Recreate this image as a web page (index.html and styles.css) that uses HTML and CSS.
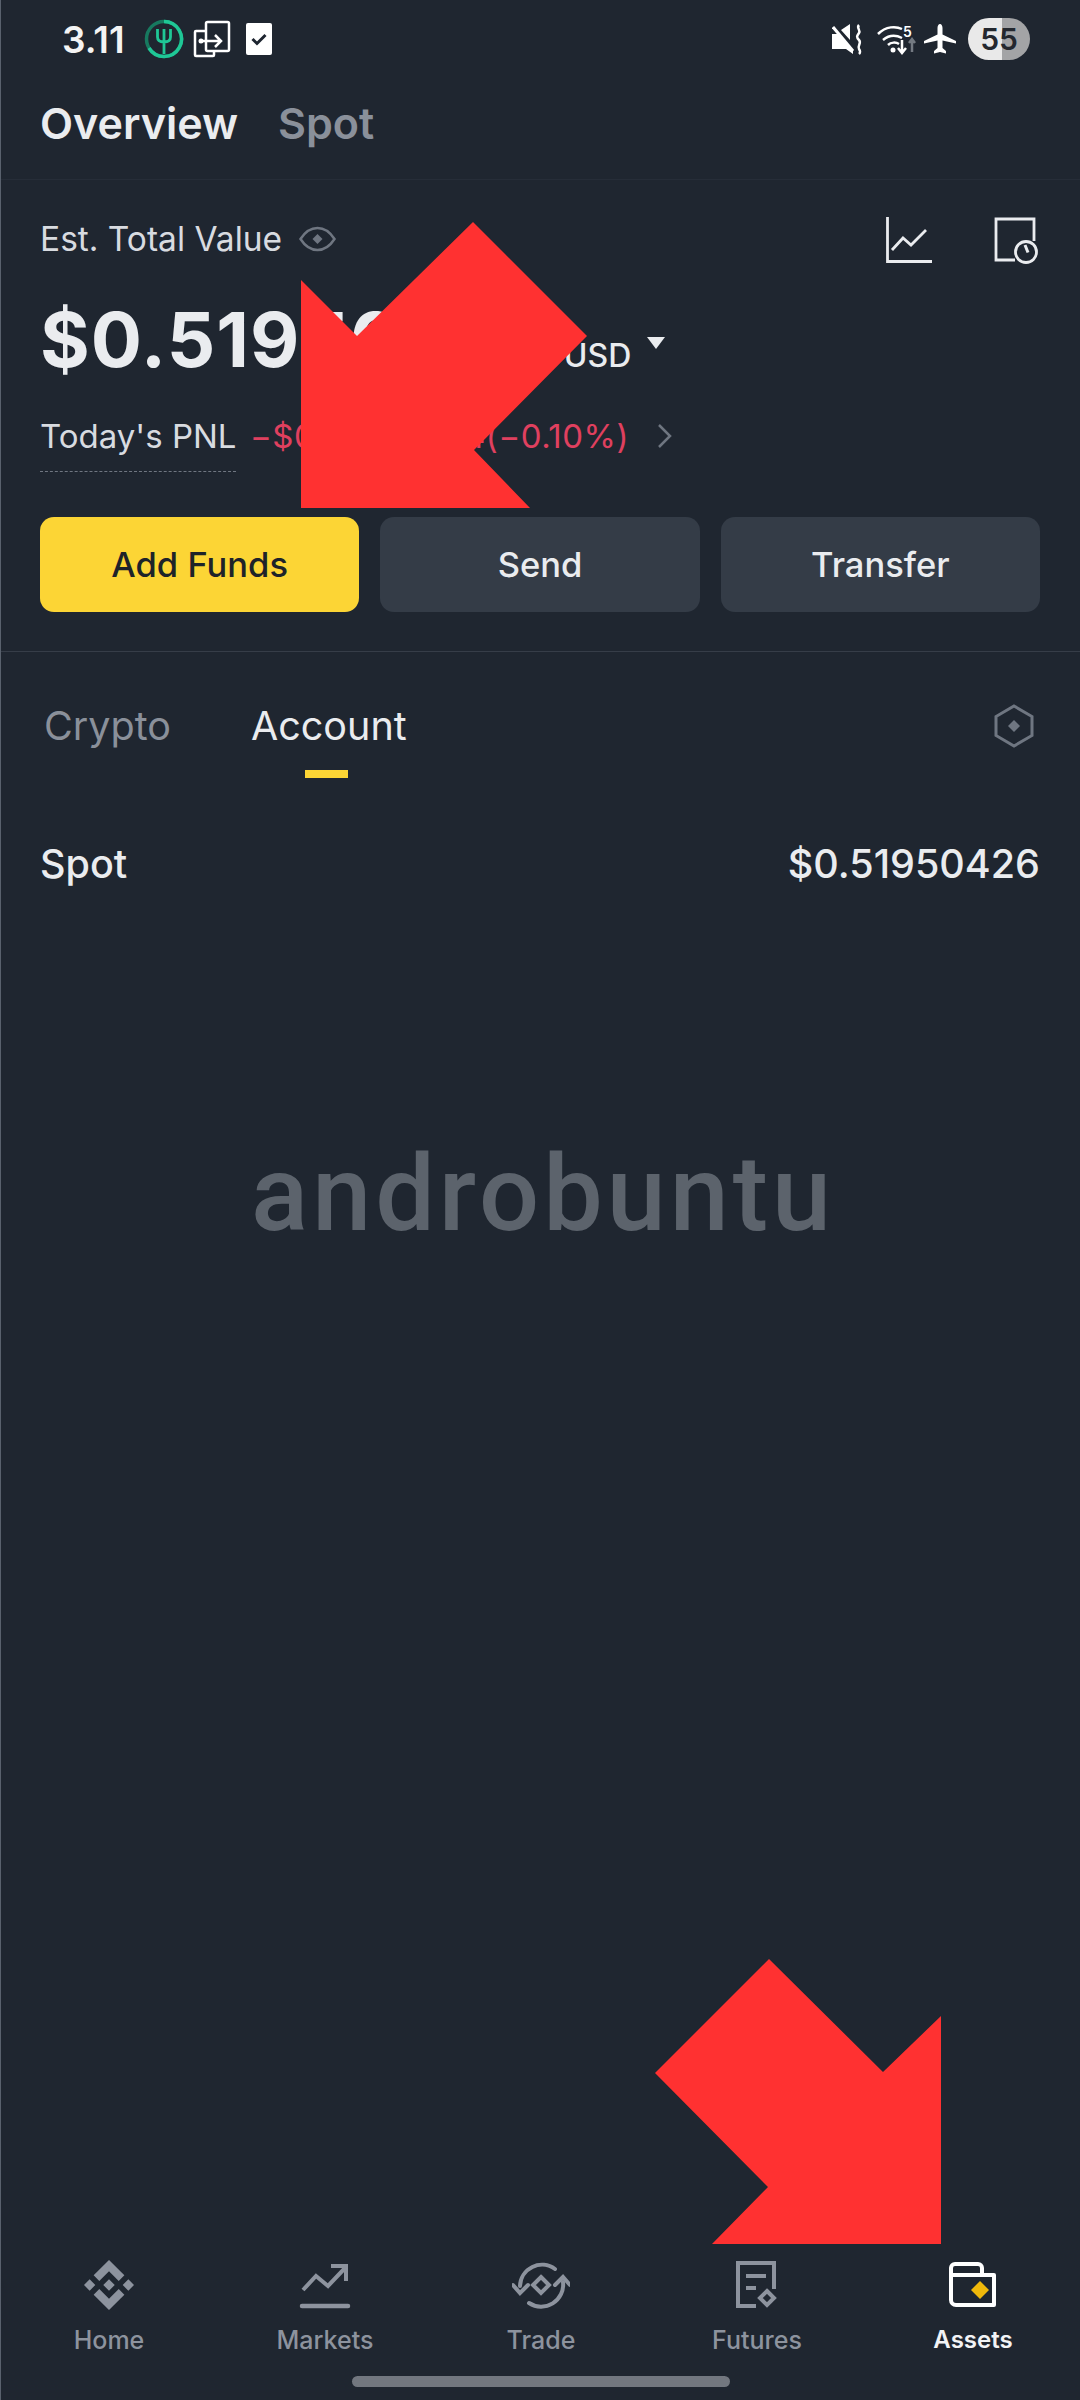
FILE: index.html
```html
<!DOCTYPE html>
<html lang="en">
  <head>
    <meta charset="UTF-8" />
    <meta name="viewport" content="width=device-width, initial-scale=1.0" />
    <title>Assets</title>
    <link rel="stylesheet" href="styles.css">
  </head>
  <body>
    <div class="screen">
      <!-- status bar -->
      <div class="status">
        <div class="status-left">
          <span class="clock">3.11</span>
          <svg class="ic-fork" viewBox="0 0 40 40"><circle cx="20" cy="20" r="17.500" fill="none" stroke="#17795f" stroke-width="3.500"/><path d="M20 2.500A17.500 17.500 0 1 1 5 29" fill="none" stroke="#1fc796" stroke-width="3.500"/><path d="M13.500 10v8c0 3.500 3 5 6.500 5s6.500-1.500 6.500-5v-8M20 10v25" fill="none" stroke="#1fc796" stroke-width="2.800"/></svg>
          <svg class="ic-dual" viewBox="0 0 38 38"><path d="M13 11H3a1 1 0 0 0-1 1v23a1 1 0 0 0 1 1h17a1 1 0 0 0 1-1v-4" fill="none" stroke="#fff" stroke-width="2.500"/><rect x="13" y="2" width="23" height="29" rx="1.500" fill="none" stroke="#fff" stroke-width="2.500"/><circle cx="8" cy="21" r="2.500" fill="#fff"/><path d="M8 21h19M22 15l6 6-6 6" fill="none" stroke="#fff" stroke-width="2.500"/></svg>
          <svg class="ic-check" viewBox="0 0 26 32"><rect width="26" height="32" rx="2" fill="#fff"/><path d="M6.500 16l4.500 4.500 8.500-8.500" fill="none" stroke="#1e2530" stroke-width="3"/></svg>
        </div>
        <div class="status-right">
          <svg class="ic-mute" viewBox="0 0 31 31"><path d="M0 10h6l15 16v4l-7-5H0zM9 6l9-6v16z" fill="#fff"/><path d="M1 3l20 24" stroke="#fff" stroke-width="3"/><path d="M27 1c-3 3 2 5 0 8s-3 4 0 7-2 6 0 9 1 4 0 5" fill="none" stroke="#fff" stroke-width="2.500"/></svg>
          <svg class="ic-wifi" viewBox="0 -3 40 34"><path d="M1 9c8-8 18-8 24-5M6 15c6-5 13-5 19-2M11 20c3-3 8-3 11-1" fill="none" stroke="#fff" stroke-width="2.500"/><circle cx="16" cy="25" r="2.500" fill="#fff"/><path d="M25 15v12M21 23l4 5 4-5" fill="none" stroke="#fff" stroke-width="2.500"/><path d="M35 27V14M32 18l3-4 3 4" fill="none" stroke="#747a82" stroke-width="2.500"/><text x="26" y="12" class="wifi-five">5</text></svg>
          <svg class="ic-plane" viewBox="0 0 32 30"><path d="M16 0c1.500 0 2.500 2 2.500 4v6.500L32 17v2.500l-13.500-3V24l3.500 3v2.500l-6-1.500-6 1.500V27l3.500-3v-7.500L0 19.500V17l13.500-6.500V4c0-2 1-4 2.500-4z" fill="#fff"/></svg>
          <div class="battery"><span>55</span></div>
        </div>
      </div>

      <!-- overview / spot -->
      <div class="top-tabs">
        <span class="top-tab active">Overview</span>
        <span class="top-tab">Spot</span>
      </div>

      <div class="summary">
        <div class="est-row">
          <div class="est-label">
            <span>Est. Total Value</span>
            <svg class="ic-eye" viewBox="0 0 37 26"><path d="M1.500 13C6 6 12 2 18.500 2S31 6 35.500 13C31 20 25 24 18.500 24S6 20 1.500 13z" fill="none" stroke="#6f7681" stroke-width="2.500"/><path d="M18.500 8l5 5-5 5-5-5z" fill="#6f7681"/></svg>
          </div>
          <div class="est-icons">
            <svg class="ic-chart" viewBox="0 0 46 46"><path d="M1.500 0v44.500H46M6 33l11-12 8 7 15-15" fill="none" stroke="#eaecef" stroke-width="2.800"/></svg>
            <svg class="ic-history" viewBox="0 0 44 47"><path d="M21 43H2V2h38v22" fill="none" stroke="#eaecef" stroke-width="2.800"/><circle cx="32" cy="35" r="10.500" fill="none" stroke="#eaecef" stroke-width="2.800"/><path d="M31 28l3 7.500" stroke="#eaecef" stroke-width="3"/></svg>
          </div>
        </div>

        <div class="balance-row">
          <span class="balance">$0.51950426</span>
          <span class="currency">USD</span>
          <span class="caret"></span>
        </div>

        <div class="pnl-row">
          <span class="pnl-label">Today's PNL</span>
          <span class="pnl-value">−$0.00052014(−0.10%)</span>
          <svg class="ic-chevron" viewBox="0 0 15 26"><path d="M2 2l11 11L2 24" fill="none" stroke="#6f7681" stroke-width="2.500"/></svg>
        </div>

        <div class="actions">
          <button class="btn btn-primary">Add Funds</button>
          <button class="btn">Send</button>
          <button class="btn">Transfer</button>
        </div>
      </div>

      <!-- crypto / account -->
      <div class="sub-tabs">
        <span class="sub-tab">Crypto</span>
        <span class="sub-tab active">Account</span>
        <svg class="ic-hex" viewBox="0 0 40 44"><path d="M20 2l18 10.500v19L20 42 2 31.500v-19z" fill="none" stroke="#6f7681" stroke-width="3"/><path d="M20 16l6 6-6 6-6-6z" fill="#6f7681"/></svg>
      </div>

      <div class="account-row">
        <span>Spot</span>
        <span>$0.51950426</span>
      </div>

      <div class="spacer"></div>

      <!-- bottom nav -->
      <nav class="nav">
        <div class="nav-item">
          <svg class="nav-icon" viewBox="0 0 126.610 126.610"><path fill="#8d939e" d="M38.730 53.200l24.590-24.580 24.600 24.600 14.300-14.310L63.320 0 24.420 38.900zM0 63.310L14.300 49l14.310 14.310-14.310 14.300zM38.730 73.410L63.320 98l24.600-24.600 14.310 14.290-38.900 38.910-38.910-38.880zM98 63.310L112.300 49l14.310 14.300-14.310 14.320zM77.830 63.300L63.320 48.780 48.810 63.280l14.510 14.500z"/></svg>
          <span>Home</span>
        </div>
        <div class="nav-item">
          <svg class="nav-icon" viewBox="0 0 50 50"><path d="M3 30l13-14 12 10L46 7M31 6h15v15" fill="none" stroke="#8d939e" stroke-width="4"/><path d="M2 46h46" stroke="#8d939e" stroke-width="4.500" stroke-linecap="round"/></svg>
          <span>Markets</span>
        </div>
        <div class="nav-item">
          <svg class="nav-icon" viewBox="20 12 58 50"><path d="M63 21A22 22 0 0 0 28 38M37 55A22 22 0 0 0 71 34" fill="none" stroke="#8d939e" stroke-width="4" stroke-linecap="round"/><path d="M21 37l7 8 8-8M63 37l8-8 7 8" fill="none" stroke="#8d939e" stroke-width="4" stroke-linecap="round"/><path d="M49 29l8 8-8 8-8-8z" fill="none" stroke="#8d939e" stroke-width="4"/></svg>
          <span>Trade</span>
        </div>
        <div class="nav-item">
          <svg class="nav-icon" viewBox="0 0 46 50"><path d="M22 46H4V3h36v26" fill="none" stroke="#8d939e" stroke-width="4"/><path d="M12 16h20M12 28h10" stroke="#8d939e" stroke-width="4"/><path d="M33 31l7 7-7 7-7-7z" fill="none" stroke="#8d939e" stroke-width="4"/></svg>
          <span>Futures</span>
        </div>
        <div class="nav-item active">
          <svg class="nav-icon" viewBox="0 0 50 50"><path d="M3 10V8a4 4 0 0 1 4-4h23a4 4 0 0 1 4 4v7h12v30H8a5 5 0 0 1-5-5zM3 15h31" fill="none" stroke="#fff" stroke-width="4" stroke-linejoin="round"/><path d="M32 21l9 9-9 9-9-9z" fill="#f0b90b"/></svg>
          <span>Assets</span>
        </div>
      </nav>
      <div class="home-bar"><span></span></div>

      <!-- things lying on top of the screenshot -->
      <div class="watermark">androbuntu</div>
      <svg class="arrow arrow-top" viewBox="0 0 286 286"><path d="M172 0l114 114-113 114 56 58H0V58l56 56z" fill="#ff3131"/></svg>
      <svg class="arrow arrow-bottom" viewBox="0 0 286 285"><path d="M114 0l114 113 58-56v228H57l56-57L0 114z" fill="#ff3131"/></svg>
    </div>
  </body>
</html>
```

FILE: styles.css
```css
* {
  box-sizing: border-box;
}
html,
body {
  margin: 0;
  padding: 0;
}
body {
  font-family: Inter, "Open Sans", sans-serif;
  background-color: #1e2530;
  color: #eaecef;
}
.screen {
  position: relative;
  width: 1080px;
  height: 2400px;
  display: flex;
  flex-direction: column;
  background-color: #1f2630;
  border-left: 1px solid #59616d;
  overflow: hidden;
}

/* status bar */
.status {
  height: 78px;
  padding: 0 50px 0 61px;
  display: flex;
  justify-content: space-between;
  align-items: center;
}
.status-left,
.status-right {
  display: flex;
  align-items: center;
}
.clock {
  font-size: 37px;
  font-weight: 600;
  color: #f4f4f4;
  width: 82px;
}
.ic-fork {
  width: 40px;
  height: 40px;
}
.ic-dual {
  width: 38px;
  height: 38px;
  margin-left: 9px;
}
.ic-check {
  width: 26px;
  height: 32px;
  margin-left: 15px;
}
.ic-mute {
  width: 31px;
  height: 31px;
}
.ic-wifi {
  width: 40px;
  height: 34px;
  margin-left: 14px;
}
.wifi-five {
  font-family: Inter, sans-serif;
  font-size: 14px;
  font-weight: 600;
  fill: #fff;
}
.ic-plane {
  width: 32px;
  height: 30px;
  margin-left: 7px;
}
.battery {
  width: 62px;
  height: 42px;
  margin-left: 12px;
  border-radius: 21px;
  background: linear-gradient(90deg, #e9e9e9 55%, #a3a4a6 55%);
  color: #24282f;
  font-size: 30px;
  font-weight: 600;
  text-align: center;
  line-height: 42px;
}

/* overview / spot */
.top-tabs {
  height: 102px;
  padding: 19px 0 0 39px;
  display: flex;
  gap: 40px;
  border-bottom: 1px solid #262d38;
  font-size: 43px;
  font-weight: 600;
}
.top-tab {
  color: #8a909a;
}
.top-tab.active {
  color: #eaecef;
}

.summary {
  padding: 38px 40px 39px 39px;
  border-bottom: 1px solid #363d48;
}
.est-row {
  display: flex;
  justify-content: space-between;
  align-items: flex-start;
  height: 48px;
}
.est-label {
  display: flex;
  align-items: center;
  gap: 17px;
  font-size: 33.500px;
  color: #d8dbe0;
  height: 42px;
}
.ic-eye {
  width: 37px;
  height: 26px;
}
.est-icons {
  display: flex;
  gap: 62px;
  margin: -1px 2px 0 0;
}
.ic-chart {
  width: 46px;
  height: 46px;
}
.ic-history {
  width: 44px;
  height: 47px;
}
.balance-row {
  margin-top: 27px;
  display: flex;
  align-items: baseline;
}
.balance {
  font-size: 76px;
  font-weight: 700;
  line-height: 92px;
  letter-spacing: 1px;
}
.currency {
  font-size: 32px;
  font-weight: 500;
  margin-left: 10px;
}
.caret {
  width: 0;
  height: 0;
  margin-left: 16px;
  border-left: 9px solid transparent;
  border-right: 9px solid transparent;
  border-top: 12px solid #eaecef;
  align-self: center;
  margin-top: 8px;
}
.pnl-row {
  margin-top: 30px;
  display: flex;
  align-items: flex-start;
  height: 58px;
  font-size: 33px;
  line-height: 42px;
}
.pnl-label {
  color: #d8dbe0;
  width: 196px;
  white-space: nowrap;
  padding-bottom: 14px;
  border-bottom: 1px dashed #6f7681;
}
.pnl-value {
  color: #e0405f;
  margin-left: 14px;
  white-space: nowrap;
  letter-spacing: 0.500px;
}
.ic-chevron {
  width: 15px;
  height: 26px;
  margin-left: 28px;
  margin-top: 8px;
}
.actions {
  margin-top: 44px;
  display: grid;
  grid-template-columns: repeat(3, 1fr);
  gap: 21px;
}
.btn {
  height: 95px;
  border: none;
  border-radius: 14px;
  background-color: #343c47;
  color: #eaecef;
  font-family: inherit;
  font-size: 34.500px;
  font-weight: 500;
}
.btn-primary {
  background-color: #fcd535;
  color: #1e2329;
}

/* crypto / account */
.sub-tabs {
  height: 148px;
  padding: 0 46px 0 43px;
  display: flex;
  align-items: center;
  gap: 80px;
  font-size: 39.500px;
  line-height: 47px;
}
.sub-tab {
  color: #8a909a;
}
.sub-tab.active {
  position: relative;
  color: #eaecef;
}
.sub-tab.active::after {
  content: "";
  position: absolute;
  left: 54px;
  bottom: -28px;
  width: 43px;
  height: 8px;
  background-color: #fcd535;
}
.ic-hex {
  width: 40px;
  height: 44px;
  margin-left: auto;
}
.account-row {
  margin-top: 41px;
  padding: 0 40px 0 39px;
  display: flex;
  justify-content: space-between;
  font-size: 39.500px;
  line-height: 46px;
  font-weight: 500;
}
.spacer {
  flex: 1;
}

/* bottom nav */
.nav {
  display: grid;
  grid-template-columns: repeat(5, 216px);
  height: 92px;
}
.nav-item {
  display: flex;
  flex-direction: column;
  align-items: center;
  gap: 15px;
  font-size: 25px;
  font-weight: 500;
  color: #8d939e;
}
.nav-icon {
  height: 50px;
  width: 58px;
}
.nav-item.active {
  color: #f2f3f5;
  font-size: 24px;
  font-weight: 600;
}
.home-bar {
  height: 48px;
  padding-top: 24px;
  display: flex;
  justify-content: center;
}
.home-bar span {
  width: 378px;
  height: 11px;
  border-radius: 6px;
  background-color: #72777f;
}

/* overlays */
.watermark {
  position: absolute;
  left: 250px;
  top: 1134px;
  font-family: Roboto, sans-serif;
  font-size: 106px;
  font-weight: 500;
  line-height: 120px;
  letter-spacing: 4px;
  color: #5c636c;
}
.arrow {
  position: absolute;
}
.arrow-top {
  left: 300px;
  top: 222px;
  width: 286px;
  height: 286px;
}
.arrow-bottom {
  left: 654px;
  top: 1959px;
  width: 286px;
  height: 285px;
}
```
